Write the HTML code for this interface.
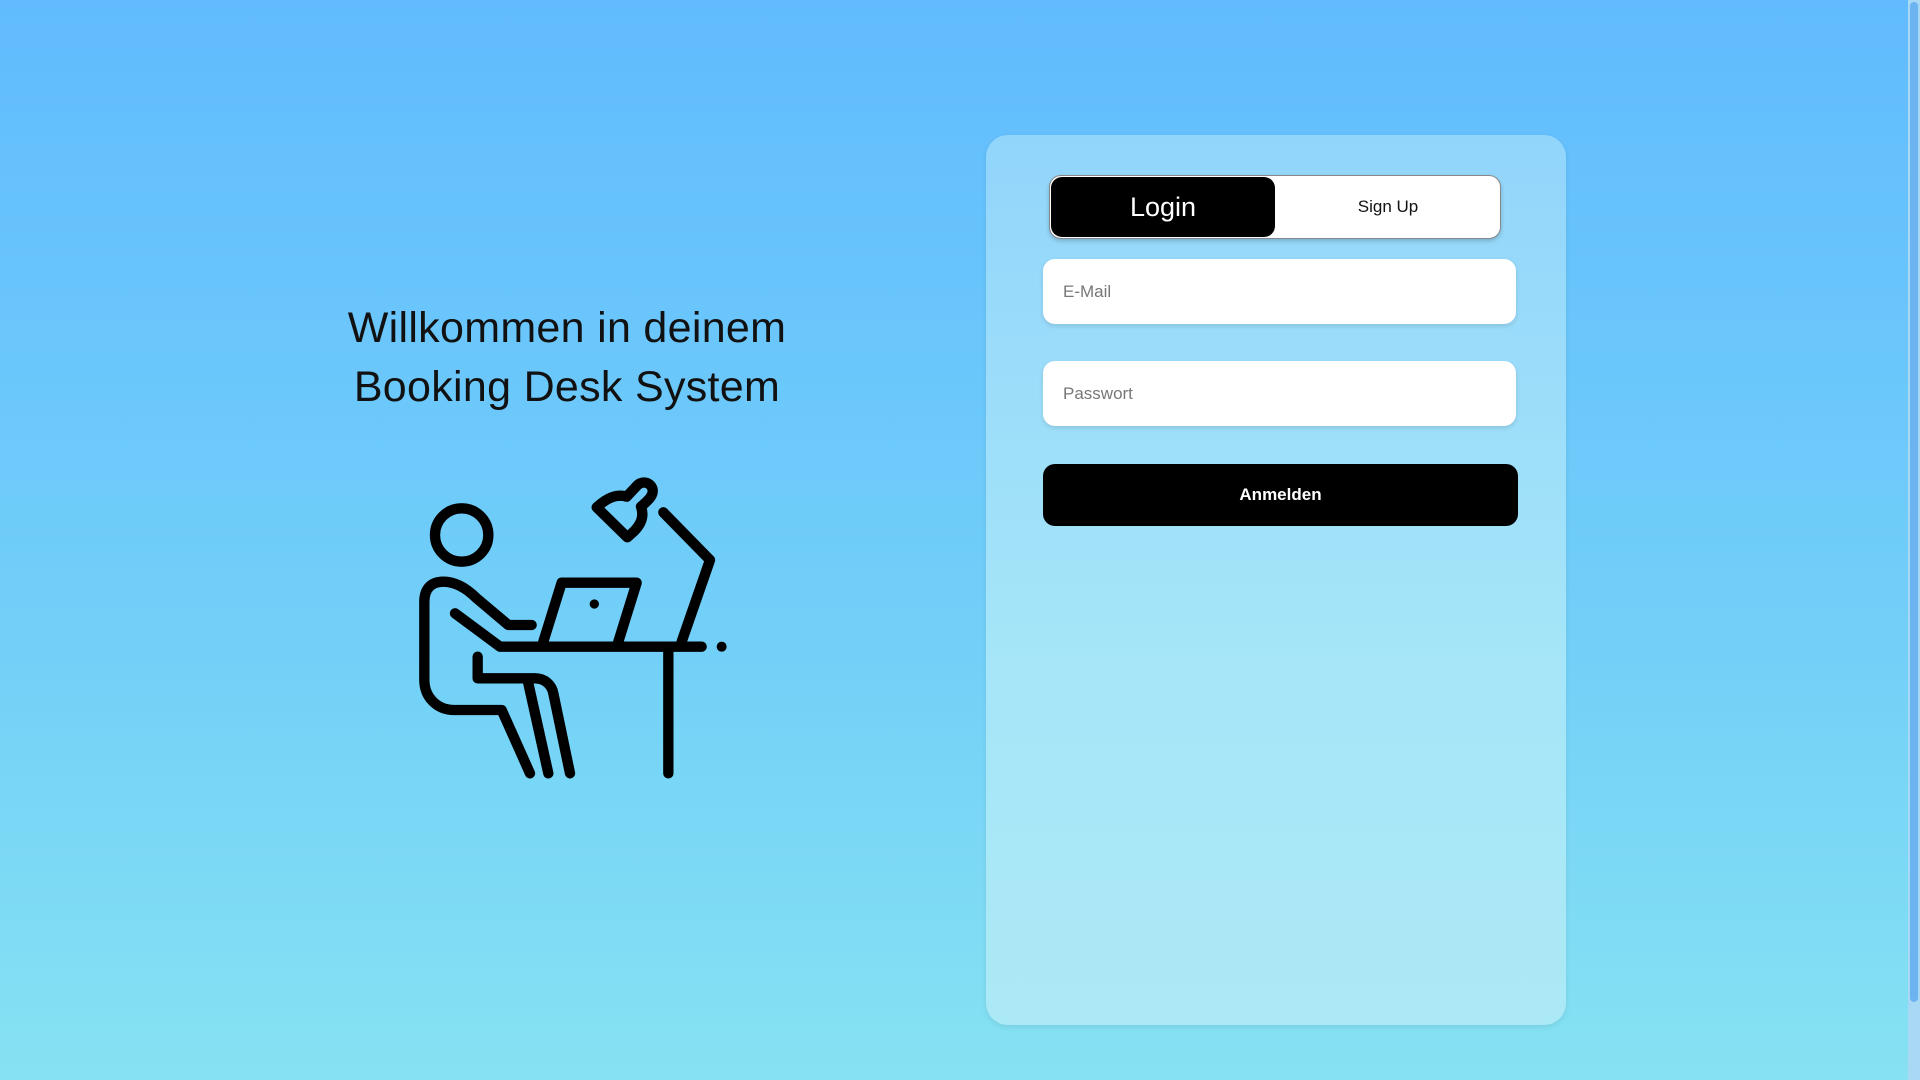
<!DOCTYPE html>
<html><head><meta charset="utf-8"><style>
html,body{margin:0;padding:0;width:1920px;height:1080px;overflow:hidden;font-family:"Liberation Sans",sans-serif}
body{background:linear-gradient(180deg,#61bbfe 0%,#72d0f8 60%,#86e2f2 100%);position:relative}
.title{position:absolute;left:267px;width:600px;top:299px;text-align:center;font-size:43px;line-height:59px;color:#111;letter-spacing:0.3px}
.card{position:absolute;left:986px;top:135px;width:580px;height:890px;border-radius:22px;background:linear-gradient(180deg,#92d5fb 0%,#a6e6f8 60%,#ace9f6 100%);box-shadow:0 2px 6px rgba(0,0,0,.08)}
.toggle{position:absolute;left:1049px;top:175px;width:450px;height:62px;border:1px solid #888;border-radius:12px;background:#fff;box-shadow:0 2px 4px rgba(0,0,0,.2);overflow:hidden}
.toggle .a{position:absolute;left:1px;top:1px;width:224px;height:60px;background:#000;border-radius:11px;color:#fff;font-size:27px;line-height:60px;text-align:center}
.toggle .b{position:absolute;left:226px;width:224px;top:0;height:62px;line-height:62px;text-align:center;font-size:17px;color:#111}
.inp{position:absolute;left:1043px;width:473px;height:65px;background:#fff;border-radius:12px;box-shadow:0 2px 5px rgba(0,0,0,.12);color:#777;font-size:17px;line-height:65px;padding-left:20px;box-sizing:border-box}
.btn{position:absolute;left:1043px;top:464px;width:475px;height:62px;background:#000;border-radius:12px;color:#fff;font-size:17px;font-weight:bold;text-align:center;line-height:62px}
.sb{position:absolute;left:1908px;top:0;width:12px;height:1080px;background:#a9d8f5}
.sb div{position:absolute;left:2px;top:2px;width:8px;height:1000px;border-radius:4px;background:#6cb4f0}
</style></head><body>
<div class="title">Willkommen in deinem<br>Booking Desk System</div>
<svg style="position:absolute;left:380px;top:450px" width="380" height="350" viewBox="0 0 1140 1050" fill="none" stroke="#000" stroke-width="31" stroke-linecap="round" stroke-linejoin="round">
<circle cx="245" cy="255" r="80"/>
<path d="M455,525 H385 L290,445 C250,405 215,395 190,395 C150,395 133,420 133,455 V690 C133,742 172,780 222,780 H365 L450,970"/>
<path d="M225,490 L360,590 H965"/>
<path d="M293,620 V685 H465 C495,685 515,705 520,730 L570,970"/>
<path d="M445,700 L505,970"/>
<path d="M865,590 V970"/>
<path d="M490,575 L545,398 H770 L715,575"/>
<path d="M850,187 L990,330 L905,575"/>
<path d="M650,172 C685,140 712,132 740,140 L772,106 C788,90 815,98 818,120 C820,136 808,148 783,170 C792,195 786,220 762,244 L742,262 Z"/>
<circle cx="643" cy="462" r="14" fill="#000" stroke="none"/>
<circle cx="1025" cy="590" r="15" fill="#000" stroke="none"/>
</svg>
<div class="card"></div>
<div class="toggle"><div class="a">Login</div><div class="b">Sign Up</div></div>
<div class="inp" style="top:259px">E-Mail</div>
<div class="inp" style="top:361px">Passwort</div>
<div class="btn">Anmelden</div>
<div class="sb"><div></div></div>
</body></html>
